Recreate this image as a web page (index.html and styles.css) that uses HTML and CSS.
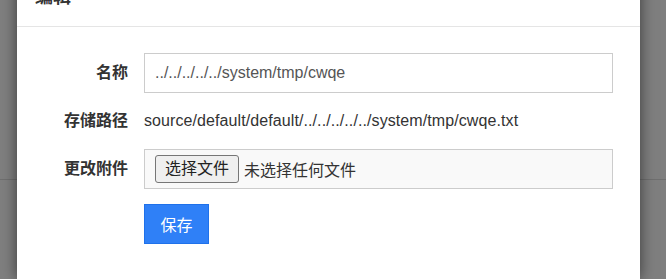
FILE: index.html
```html
<!DOCTYPE html>
<html lang="zh">
<head>
<meta charset="utf-8">
<title>编辑</title>
<link rel="stylesheet" href="styles.css">
</head>
<body>
<div class="backdrop"><div class="bg-line"></div></div>
<div class="modal">
  <div class="modal-header"><h4 class="modal-title">编辑</h4></div>
  <div class="modal-body">
    <form class="form">
      <label class="label">名称</label>
      <div class="field"><input class="input" type="text" value="../../../../../system/tmp/cwqe"></div>
      <label class="label">存储路径</label>
      <div class="field static">source/default/default/../../../../../system/tmp/cwqe.txt</div>
      <label class="label">更改附件</label>
      <div class="field"><div class="file-box"><span class="file-btn">选择文件</span><span class="file-text">未选择任何文件</span></div></div>
      <div></div>
      <div class="field actions"><button type="button" class="save">保存</button></div>
    </form>
  </div>
</div>
</body>
</html>
```
FILE: styles.css
```css
html, body {
  margin: 0;
  padding: 0;
  height: 100%;
  overflow: hidden;
}
body {
  background: #7f7f7f;
  font-family: "Liberation Sans", "Noto Sans CJK SC", sans-serif;
  font-size: 16px;
  color: #333;
}
.backdrop {
  height: 179px;
  border-bottom: 1px solid #6f6f6f;
}
.modal {
  position: absolute;
  left: 17px;
  top: -23px;
  bottom: 0;
  width: 623px;
  background: #fff;
  box-shadow: 0 0 14px rgba(0, 0, 0, 0.55);
}
.modal-header {
  padding: 10px 18px 19px;
  border-bottom: 1px solid #e5e5e5;
}
.modal-title {
  margin: 0;
  font-size: 18px;
  line-height: 20px;
  font-weight: bold;
  color: #333;
}
.modal-body {
  padding: 26px 27px 0 20px;
}
.form {
  display: grid;
  grid-template-columns: 91px 1fr;
  column-gap: 16px;
  row-gap: 8px;
  align-items: center;
}
.label {
  text-align: right;
  font-weight: bold;
  color: #333;
  line-height: 40px;
}
.field.static {
  line-height: 40px;
  color: #333;
  letter-spacing: 0.09px;
}
.input {
  box-sizing: border-box;
  width: 100%;
  height: 40px;
  border: 1px solid #ccc;
  padding: 0 10px;
  font: inherit;
  color: #555;
  outline: none;
  display: block;
}
.file-box {
  box-sizing: border-box;
  height: 40px;
  border: 1px solid #ccc;
  background: #f9f9f9;
  display: flex;
  align-items: center;
  padding-left: 10px;
}
.file-btn {
  box-sizing: border-box;
  height: 28px;
  line-height: 26px;
  padding: 0 9px;
  border: 1px solid #767676;
  border-radius: 3px;
  background: #efefef;
  color: #222;
}
.file-text {
  margin-left: 5px;
  color: #333;
}
.actions {
  margin-top: 7px;
}
.save {
  box-sizing: border-box;
  width: 65px;
  height: 40px;
  background: #2f80f7;
  border: 1px solid #1f71ea;
  color: #fff;
  font: inherit;
  padding: 0;
  cursor: pointer;
}
```
